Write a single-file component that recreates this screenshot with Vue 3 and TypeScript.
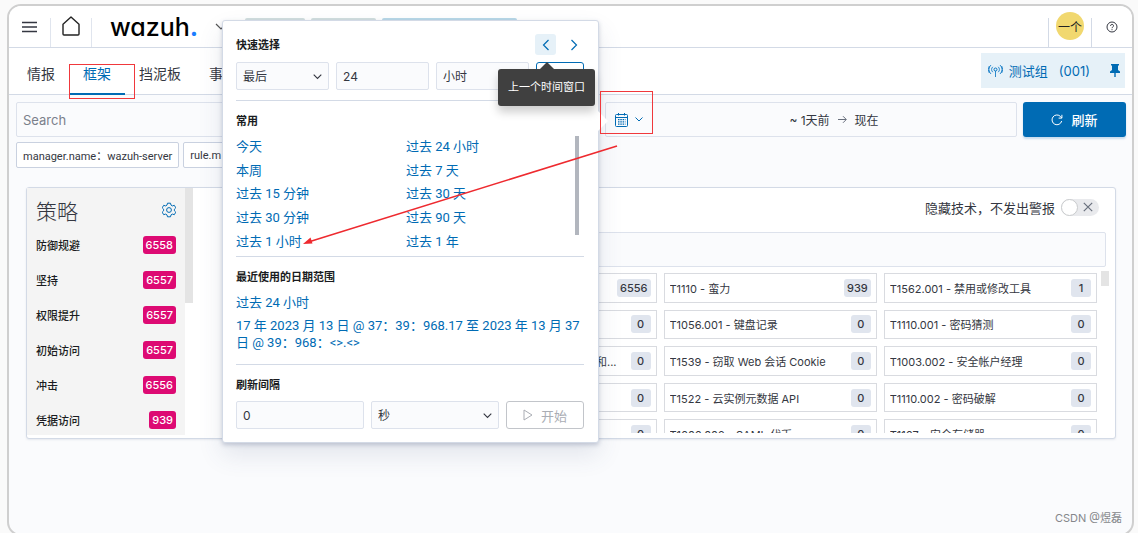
<script setup lang="ts">
import { ref } from 'vue'

interface Tactic {
  name: string
  count: number
}

interface Technique {
  name: string
  count: number
  trailing?: boolean
}

const tabs: string[] = ['情报', '框架', '挡泥板', '事']
const activeTab = ref('框架')

const filters: string[] = ['manager.name：wazuh-server', 'rule.m']

const commonRanges: string[] = [
  '今天', '过去 24 小时',
  '本周', '过去 7 天',
  '过去 15 分钟', '过去 30 天',
  '过去 30 分钟', '过去 90 天',
  '过去 1 小时', '过去 1 年',
]

const recentRanges: string[] = [
  '过去 24 小时',
  '17 年 2023 月 13 日 @ 37：39：968.17 至 2023 年 13 月 37 日 @ 39：968：<>.<>',
]

const tactics: Tactic[] = [
  { name: '防御规避', count: 6558 },
  { name: '坚持', count: 6557 },
  { name: '权限提升', count: 6557 },
  { name: '初始访问', count: 6557 },
  { name: '冲击', count: 6556 },
  { name: '凭据访问', count: 939 },
]

const techniques: Technique[] = [
  { name: '', count: 6556 },
  { name: 'T1110 - 蛮力', count: 939 },
  { name: 'T1562.001 - 禁用或修改工具', count: 1 },
  { name: '', count: 0 },
  { name: 'T1056.001 - 键盘记录', count: 0 },
  { name: 'T1110.001 - 密码猜测', count: 0 },
  { name: '和...', count: 0, trailing: true },
  { name: 'T1539 - 窃取 Web 会话 Cookie', count: 0 },
  { name: 'T1003.002 - 安全帐户经理', count: 0 },
  { name: '', count: 0 },
  { name: 'T1522 - 云实例元数据 API', count: 0 },
  { name: 'T1110.002 - 密码破解', count: 0 },
  { name: '', count: 0 },
  { name: 'T1606.002 - SAML 代币', count: 0 },
  { name: 'T1167 - 安全存储器', count: 0 },
]

const amount = ref('24')
const interval = ref('0')
const hideEmpty = ref(false)
</script>

<template>
  <div class="frame">
    <header class="topbar">
      <button class="icon-btn menu" aria-label="菜单">
        <svg width="15" height="12" viewBox="0 0 15 12"><path d="M0 1.500h15M0 6h15M0 10.500h15" stroke="#343741" stroke-width="1.600" /></svg>
      </button>
      <a href="#" class="home" aria-label="主页">
        <svg width="18" height="20" viewBox="0 0 18 20"><path d="M1 8.200 9 1l8 7.200V18a1 1 0 0 1-1 1H2a1 1 0 0 1-1-1z" fill="none" stroke="#222" stroke-width="1.400" stroke-linejoin="round" /></svg>
      </a>
      <a href="#" class="logo">wazuh<span>.</span></a>
      <svg class="logo-chevron" width="12" height="8" viewBox="0 0 12 8"><path d="m1 1 5 5 5-5" fill="none" stroke="#555" stroke-width="1.200" /></svg>
      <div class="crumbs">
        <i class="crumb"></i>
        <i class="crumb"></i>
        <i class="crumb current"></i>
      </div>
      <div class="user">
        <button class="avatar">一个</button>
      </div>
      <button class="icon-btn help" aria-label="帮助">
        <svg width="12" height="12" viewBox="0 0 12 12" fill="none" stroke="#343741"><circle cx="6" cy="6" r="5" /><path d="M4.600 4.900a1.450 1.450 0 1 1 2.100 1.200c-.5.300-.7.500-.7 1.100" /><path d="M6 8.200v1" /></svg>
      </button>
    </header>

    <nav class="tabs">
      <button v-for="tab in tabs" :key="tab" class="tab" :class="{ active: tab === activeTab }" @click="activeTab = tab">
        {{ tab }}
        <i v-if="tab === '框架'" class="mark tab-mark"></i>
      </button>
      <div class="agent">
        <a href="#" class="agent-link">
          <svg width="15" height="13" viewBox="0 0 15 13" fill="none" stroke="#0071c2"><circle cx="7.500" cy="5.500" r="1.500" /><path d="M7.500 7v6M4.800 8.200a3.600 3.600 0 0 1 0-5.400M10.200 8.200a3.600 3.600 0 0 0 0-5.400M3 10a6 6 0 0 1 0-9M12 10a6 6 0 0 0 0-9M1.300 9a6.500 6.500 0 0 1 0-7M13.700 9a6.500 6.500 0 0 0 0-7" stroke-width=".8" /></svg>
          <span>测试组</span>
          <span class="agent-id">(001)</span>
        </a>
        <button class="icon-btn" aria-label="固定">
          <svg width="10" height="13" viewBox="0 0 10 13"><path d="M1 0h8v1.500H8V6l2 1.500V9H5.700v4H4.300V9H0V7.500L2 6V1.500H1z" fill="#006bb4" /></svg>
        </button>
      </div>
    </nav>

    <main class="content">
      <div class="query">
        <input class="search" type="text" placeholder="Search" aria-label="Search" />
        <div class="picker">
          <button class="quick" aria-label="日期快速选择">
            <svg width="13" height="14" viewBox="0 0 13 14" fill="none" stroke="#006bb4"><rect x=".5" y="1.500" width="12" height="12" rx="1" /><path d="M.5 4.500h12M3.500 0v2.500M9.500 0v2.500" /><path d="M3 6.700h7.500M3 8.900h7.500M3 11.100h7.500" stroke-width="1.300" stroke-dasharray="1.500 .8" /></svg>
            <svg width="8" height="5" viewBox="0 0 8 5"><path d="m.5.5 3.500 3.500L7.500.5" fill="none" stroke="#006bb4" /></svg>
            <i class="mark quick-mark"></i>
          </button>
          <div class="range">
            <button>~ 1天前</button>
            <svg width="9" height="9" viewBox="0 0 9 9"><path d="M0 4.500h8M5 1.200l3.300 3.300L5 7.800" fill="none" stroke="#69707d" /></svg>
            <button>现在</button>
          </div>

          <section class="popover">
            <div class="pop-head">
              <h2>快速选择</h2>
              <button class="step hovered" aria-label="上一个时间窗口">
                <svg width="8" height="12" viewBox="0 0 8 12"><path d="M6.500 1 1.500 6l5 5" fill="none" stroke="#006bb4" stroke-width="1.200" /></svg>
              </button>
              <button class="step" aria-label="下一个时间窗口">
                <svg width="8" height="12" viewBox="0 0 8 12"><path d="m1.500 1 5 5-5 5" fill="none" stroke="#006bb4" stroke-width="1.200" /></svg>
              </button>
              <div class="tooltip" role="tooltip">上一个时间窗口</div>
            </div>
            <div class="fields quick-fields">
              <div class="select">
                <select aria-label="时态"><option>最后</option></select>
                <svg width="9" height="6" viewBox="0 0 9 6"><path d="m.7.7 3.800 3.800L8.300.7" fill="none" stroke="#343741" stroke-width="1.100" /></svg>
              </div>
              <input v-model="amount" type="text" aria-label="数量" />
              <div class="select">
                <select aria-label="单位"><option>小时</option></select>
              </div>
              <button class="apply" aria-label="应用"></button>
            </div>
            <hr />
            <h2>常用</h2>
            <div class="common">
              <a v-for="r in commonRanges" :key="r" href="#">{{ r }}</a>
              <i class="thumb"></i>
            </div>
            <hr />
            <h2>最近使用的日期范围</h2>
            <div class="recent">
              <a v-for="r in recentRanges" :key="r" href="#">{{ r }}</a>
            </div>
            <hr />
            <h2>刷新间隔</h2>
            <div class="fields refresh-fields">
              <input v-model="interval" type="text" aria-label="刷新间隔" />
              <div class="select">
                <select aria-label="间隔单位"><option>秒</option></select>
                <svg width="9" height="6" viewBox="0 0 9 6"><path d="m.7.7 3.800 3.800L8.300.7" fill="none" stroke="#343741" stroke-width="1.100" /></svg>
              </div>
              <button class="start" disabled>
                <svg width="10" height="12" viewBox="0 0 10 12"><path d="M1 1v10l8-5z" fill="none" stroke="#aaadb4" stroke-linejoin="round" /></svg>
                开始
              </button>
            </div>
            <svg class="pointer" width="320" height="104" viewBox="0 0 320 104"><path d="M315 3 8 98.500" stroke="#ee2a2f" stroke-width="1.600" /><path d="m1 101 7.500-6.500 2 6z" fill="#ee2a2f" /></svg>
          </section>
        </div>
        <button class="refresh">
          <svg width="12" height="12" viewBox="0 0 12 12" fill="none" stroke="#fff"><path d="M10.700 7A4.900 4.900 0 1 1 9.600 2.600L10.800 4M10.900.8V4.100H7.600" /></svg>
          刷新
        </button>
      </div>

      <div class="filters">
        <button v-for="f in filters" :key="f" class="filter">{{ f }}</button>
      </div>

      <div class="panel">
        <aside class="tactics">
          <div class="tactics-head">
            <h1>策略</h1>
            <button class="icon-btn" aria-label="设置">
              <svg width="14" height="16" viewBox="0 0 14 16" fill="none" stroke="#006bb4" stroke-linejoin="round"><path d="M5.500 1.200h3l.5 1.900 1.400.8 1.900-.6 1.500 2.500-1.400 1.400v1.600l1.400 1.400-1.500 2.500-1.900-.6-1.400.8-.5 1.900h-3L5 12.900l-1.400-.8-1.900.6-1.500-2.500 1.400-1.400V7.200L.2 5.800l1.500-2.500 1.900.6L5 3.100z" /><circle cx="7" cy="8" r="2.400" /></svg>
            </button>
          </div>
          <ul>
            <li v-for="t in tactics" :key="t.name">
              <a href="#">{{ t.name }}</a>
              <span class="badge hot">{{ t.count }}</span>
            </li>
          </ul>
        </aside>
        <i class="side-thumb"></i>
        <section class="techniques">
          <label class="switch">
            隐藏技术，不发出警报
            <span class="track">
              <input v-model="hideEmpty" type="checkbox" role="switch" />
              <svg width="10" height="10" viewBox="0 0 10 10"><path d="m.8.8 8.400 8.400M9.200.8.800 9.200" stroke="#69707d" stroke-width="1.200" /></svg>
            </span>
          </label>
          <input class="tech-search" type="text" aria-label="筛选技术" />
          <div class="tech-scroll">
            <div class="tech-grid">
              <button v-for="(t, i) in techniques" :key="i" class="tech">
                <span class="tech-name" :class="{ trailing: t.trailing }">{{ t.name }}</span>
                <span class="badge">{{ t.count }}</span>
              </button>
            </div>
            <i class="tech-thumb"></i>
          </div>
        </section>
      </div>
    </main>
    <div class="credit">CSDN @煜磊</div>
  </div>
</template>

<style>
body {
  margin: 0;
  overflow: hidden;
  background: #fafafa;
}
</style>

<style scoped>
* {
  box-sizing: border-box;
}
.frame {
  position: relative;
  min-height: calc(100vh - 1px);
  margin: 4px 4px 0 7px;
  border: 2px solid #cfcfcf;
  border-radius: 14px;
  background: #fafbfd;
  color: #343741;
  font-family: Inter, "Noto Sans CJK SC", sans-serif;
  font-size: 13px;
}
button,
input,
select {
  font: inherit;
  color: inherit;
  margin: 0;
}
button {
  padding: 0;
  border: 0;
  background: none;
}
a {
  color: #006bb4;
  text-decoration: none;
}
h1,
h2,
ul {
  margin: 0;
  padding: 0;
}
svg {
  display: block;
  flex: none;
}
.icon-btn {
  display: flex;
  align-items: center;
  justify-content: center;
}

/* Top bar */
.topbar {
  display: flex;
  align-items: center;
  height: 42px;
  border-bottom: 1px solid #d3dae6;
  border-radius: 12px 12px 0 0;
  background: #fff;
}
.menu {
  width: 41px;
}
.home {
  display: flex;
  justify-content: center;
  align-self: flex-end;
  width: 42px;
  height: 29px;
  border: solid #e0e5ee;
  border-width: 0 1px;
}
.home svg {
  margin-top: -2px;
}
.logo {
  margin-left: 18px;
  color: #000;
  font-size: 25px;
  font-weight: 500;
  line-height: 40px;
  font-feature-settings: "cv11";
}
.logo span {
  color: #1a7dff;
  font-weight: 700;
}
.logo-chevron {
  margin-left: 17px;
}
.crumbs {
  display: flex;
  align-self: flex-start;
  flex: 1;
  gap: 6px;
  padding: 12px 0 0 18px;
}
.crumb {
  width: 60px;
  height: 20px;
  border-radius: 2px;
  background: #d3dfe0;
}
.crumb + .crumb {
  width: 65px;
}
.crumb.current {
  width: 135px;
  background: #b9d9e9;
}
.user {
  display: flex;
  justify-content: center;
  align-self: flex-end;
  width: 44px;
  height: 29px;
  border: solid #d3dae6;
  border-width: 0 1px;
}
.avatar {
  width: 28px;
  height: 28px;
  margin-top: -6px;
  border-radius: 50%;
  background: #f1d86f;
  color: #222;
  font-size: 12px;
  white-space: nowrap;
}
.help {
  width: 40px;
}

/* Tabs */
.tabs {
  display: flex;
  height: 47px;
  padding: 0 7px 0 4px;
  border-bottom: 1px solid #d3dae6;
  background: #fff;
}
.tab {
  position: relative;
  height: 47px;
  padding: 7px 14px 0;
  border-bottom: 2px solid transparent;
  font-size: 14px;
  line-height: 20px;
}
.tab.active {
  border-color: #006bb4;
  color: #006bb4;
}
.mark {
  position: absolute;
  border: 1px solid #f0383c;
}
.tab-mark {
  inset: 16px -10px -6px 0;
}
.agent {
  display: flex;
  align-items: center;
  gap: 20px;
  height: 35px;
  margin: 5px 0 0 auto;
  padding: 0 5px 0 7px;
  background: #e6f1f8;
}
.agent-link {
  display: flex;
  align-items: center;
  gap: 6px;
}
.agent-id {
  margin-left: 5px;
}

/* Query bar */
.content {
  padding: 7px 6px 0 7px;
}
.query {
  display: flex;
  gap: 6px;
  height: 35px;
}
.search,
.picker,
.tech-search,
.fields input,
.fields select {
  border: 1px solid #dde2ec;
  border-radius: 2px;
  background: #fafbfd;
}
.search {
  flex: 1;
  min-width: 0;
  padding: 0 6px;
}
.search::placeholder {
  color: #7a808b;
}
.picker {
  position: relative;
  display: flex;
  flex: 0 0 412px;
}
.quick {
  position: relative;
  display: flex;
  align-items: center;
  justify-content: center;
  gap: 7px;
  width: 46px;
}
.quick-mark {
  inset: -12px -1px 2px -6px;
  z-index: 3;
}
.range {
  display: flex;
  flex: 1;
  align-items: center;
  justify-content: center;
  gap: 8px;
  font-size: 12px;
}
.refresh {
  display: flex;
  align-items: center;
  justify-content: center;
  gap: 8px;
  flex: 0 0 103px;
  border-radius: 3px;
  background: #006bb4;
  box-shadow: 0 2px 2px #006bb433;
  color: #fff;
  font-weight: 500;
}
.filters {
  display: flex;
  gap: 4px;
  margin-top: 5px;
}
.filter {
  height: 26px;
  padding: 0 6px;
  border: 1px solid #c9d1e0;
  border-radius: 2px;
  background: #fff;
  font-family: Roboto, "Noto Sans CJK SC", sans-serif;
  font-size: 11px;
}

/* Date popover */
.popover {
  position: absolute;
  top: -83px;
  right: calc(100% + 7px);
  z-index: 2;
  width: 377px;
  padding: 13px 14px 13px 13px;
  border: 1px solid #d3dae6;
  border-radius: 3px;
  background: #fff;
  box-shadow: 0 12px 24px #414f7820, 0 2px 4px #414f7840;
}
.popover::after {
  content: "";
  position: absolute;
  top: 90px;
  left: 100%;
  border: 10px solid transparent;
  border-left-color: #fff;
  border-right: 0;
}
.popover h2 {
  color: #1a1c21;
  font-size: 11px;
  font-weight: 700;
  line-height: 16px;
}
.popover hr {
  height: 1px;
  margin: 0 0 12px;
  border: 0;
  background: #d3dae6;
}
.pop-head {
  position: relative;
  display: flex;
  align-items: center;
  gap: 7px;
  height: 21px;
}
.pop-head h2 {
  flex: 1;
}
.step {
  display: flex;
  align-items: center;
  justify-content: center;
  width: 21px;
  height: 21px;
  border-radius: 3px;
}
.step.hovered {
  background: #e6f1f8;
}
.tooltip {
  position: absolute;
  top: 35px;
  right: -11px;
  z-index: 1;
  padding: 10px 10px 11px;
  border-radius: 3px;
  background: #404040;
  box-shadow: 0 6px 10px #0003;
  color: #fff;
  font-size: 11px;
  line-height: 16px;
}
.tooltip::before {
  content: "";
  position: absolute;
  bottom: 100%;
  left: 42px;
  border: 7px solid transparent;
  border-top: 0;
  border-bottom-color: #404040;
}
.fields {
  display: grid;
  gap: 7px;
  height: 28px;
  font-size: 12px;
}
.quick-fields {
  grid-template-columns: 1fr 1fr 1fr 48px;
  margin: 7px 0 10px;
}
.refresh-fields {
  grid-template-columns: 1fr 1fr 78px;
  margin-top: 8px;
}
.fields input,
.fields select {
  width: 100%;
  height: 28px;
  padding: 0 6px;
}
.select {
  position: relative;
}
.select select {
  appearance: none;
}
.select svg {
  position: absolute;
  top: 12px;
  right: 7px;
  pointer-events: none;
}
.apply {
  border: 1px solid #006bb4;
  border-radius: 3px;
}
.start {
  display: flex;
  align-items: center;
  justify-content: center;
  gap: 8px;
  border: 1px solid #c2c5ca;
  border-radius: 3px;
  color: #aaadb4;
  font-size: 13px;
}
.common {
  position: relative;
  display: grid;
  grid-template-columns: 1fr 1fr;
  grid-template-rows: repeat(5, 1fr);
  align-items: center;
  height: 118px;
  margin: 5px 0 4px;
  padding-right: 8px;
  font-family: Roboto, "Noto Sans CJK SC", sans-serif;
  font-size: 13px;
}
.thumb {
  position: absolute;
  top: 2px;
  right: 5px;
  width: 4px;
  height: 99px;
  background: #b2b6be;
}
.recent {
  display: flex;
  flex-direction: column;
  gap: 6px;
  margin: 9px 0 13px;
  font-family: Roboto, "Noto Sans CJK SC", sans-serif;
  font-size: 13px;
  line-height: 17px;
}
.pointer {
  position: absolute;
  top: 122px;
  left: 79px;
}

/* Framework panel */
.panel {
  display: flex;
  height: 252px;
  margin: 19px 10px 0;
  border: 1px solid #d3dae6;
  border-radius: 3px;
  background: #fff;
  box-shadow: 0 1px 2px #98a2b333;
}
.tactics {
  flex: 0 0 158px;
  height: 247px;
  padding: 8px 9px 0;
  background: #f4f4f4;
}
.tactics-head {
  display: flex;
  justify-content: space-between;
  height: 31px;
}
.tactics-head h1 {
  font-size: 21px;
  font-weight: 300;
  line-height: 32px;
}
.tactics-head button {
  height: 28px;
}
.tactics ul {
  list-style: none;
}
.tactics li {
  display: flex;
  align-items: center;
  justify-content: space-between;
  height: 35px;
}
.tactics li a {
  color: #1a1c21;
  font-size: 11px;
  font-weight: 500;
}
.badge {
  flex: none;
  min-width: 20px;
  padding: 0 3px;
  border-radius: 3px;
  background: #e0e5ee;
  color: #343741;
  font-size: 11px;
  font-weight: 500;
  line-height: 18px;
  text-align: center;
}
.badge.hot {
  background: #dd0a73;
  color: #fff;
}
.side-thumb {
  flex: 0 0 8px;
  height: 115px;
  background: #e4e4e4;
}
.techniques {
  display: flex;
  flex: 1;
  flex-direction: column;
  min-width: 0;
  padding: 10px 9px 5px 30px;
}
.switch {
  display: flex;
  align-items: center;
  align-self: flex-end;
  gap: 6px;
  height: 18px;
  margin-right: 7px;
}
.track {
  display: flex;
  align-items: center;
  justify-content: space-between;
  width: 38px;
  height: 17px;
  padding-right: 6px;
  border-radius: 9px;
  background: #e9eaed;
}
.track input {
  appearance: none;
  width: 17px;
  height: 17px;
  border: 1px solid #c9cbcd;
  border-radius: 50%;
  background: #fff;
}
.tech-search {
  width: 100%;
  height: 35px;
  margin: 16px 0 4px;
  flex: none;
}
.tech-scroll {
  display: flex;
  flex: 1;
  gap: 4px;
  min-height: 0;
  margin-right: -3px;
  overflow: hidden;
}
.tech-grid {
  display: grid;
  flex: 1;
  grid-template-columns: repeat(4, minmax(0, 1fr));
  grid-template-rows: repeat(5, 1fr);
  gap: 7px;
  height: 176px;
  margin-top: 2px;
}
.tech {
  display: flex;
  align-items: center;
  gap: 4px;
  padding: 0 5px;
  border: 1px solid #d9dbe0;
  background: #fff;
  font-size: 11px;
}
.tech:nth-child(3n + 1) {
  grid-column-start: 2;
}
.tech-name {
  flex: 1;
  overflow: hidden;
  text-align: left;
  white-space: nowrap;
}
.tech-name.trailing {
  padding-right: 10px;
  text-align: right;
}
.tech-thumb {
  flex: 0 0 8px;
  height: 15px;
  background: #e4e4e4;
}
.credit {
  position: absolute;
  right: 10px;
  bottom: 9px;
  color: #85878b;
  font-size: 11px;
}
</style>
